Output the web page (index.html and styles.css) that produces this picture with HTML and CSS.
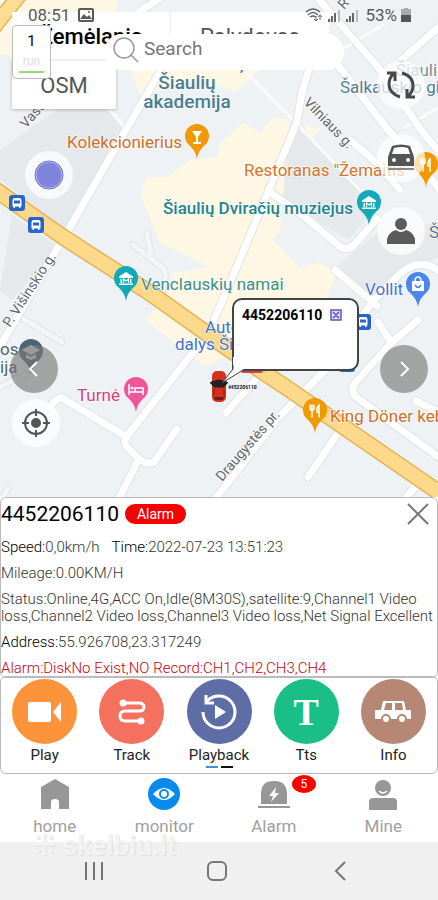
FILE: index.html
```html
<!DOCTYPE html>
<html lang="en">

<head>
  <meta charset="UTF-8">
  <meta name="viewport" content="width=device-width, initial-scale=1">
  <title>Monitor</title>
  <link rel="stylesheet" href="styles.css">
</head>

<body>
  <div class="screen">
    <main class="map">
      <svg class="map-canvas" viewBox="0 0 438 497" preserveAspectRatio="xMidYMid slice">
        <defs>
          <path id="pin" d="M0 22C-1.500 14-4 12-8.500 7.500A12 12 0 1 1 8.500 7.500C4 12 1.500 14 0 22Z" />
          <g id="bus">
            <rect x="-8" y="-8" width="16" height="16" rx="3" fill="#2465cf" />
            <path d="M-4.500-3Q-4.500-5-2-5H2Q4.500-5 4.500-3V3.500H3.500V5H2V3.500H-2V5H-3.500V3.500H-4.500Z" fill="#fff" />
            <path d="M-3-2.500H3V.5H-3Z" fill="#2465cf" />
          </g>
          <g id="museum" fill="#fff">
            <path d="M-7-2.500L0-7 7-2.500V-1H-7ZM-5.500 0H-4V4H-5.500ZM4 0H5.500V4H4ZM-7 4.500H7V6H-7Z" />
            <path d="M-2.500 4V0L0 2 2.500 0V4" fill="none" stroke="#fff" stroke-width="1.200" />
          </g>
          <g id="fork" fill="none" stroke="#fff" stroke-width="1.500" stroke-linecap="round">
            <path d="M-5-6V-2.500Q-5-1-3-1T-1-2.500V-6M-3-6V6M4 6V-6Q1.500-4 2 1H4" />
          </g>
          <!-- every white street, drawn twice: casing and fill -->
          <g id="streets">
            <path d="M166-6L136 14M160 72L127 128 66 234 0 346" />
            <path d="M310 66L302 92 297 122 270 187 238 264 214 320M205 338L187 360 127 436Q123 440 127 447L139 459Q147 465 154 462L177 429M137 463L118 500M127 437L62 398Q58 396 50 407" />
            <path d="M312-8L378 67 421 130 450 165M334 60L388 130 412 154 440 190M350 140L377 163 400 190" />
            <path d="M271 193L305 217 338 245Q346 252 354 245L377 219M401 60L440 26" />
            <path d="M335 270L377 306M216 498L278 418 330 365 372 302 400 274Q420 256 440 272M378 322L391 342" />
            <path d="M418 320L391 343 355 383Q350 390 356 397L378 413 440 458M338 433L308 477M256 379L226 413M415 487L402 502M416 401L440 413" />
          </g>
        </defs>
        <rect width="438" height="497" fill="#eff2f4" />
        <g fill="#e6e9ec">
          <path d="M0 150L90 86 125 130 65 230 0 180ZM12 215L60 248 12 300 0 290ZM268 190L300 128 360 186 375 210 348 240ZM335 268L378 232 438 222V258L400 270 374 300ZM130 60H165L145 80Z" />
        </g>
        <g fill="#fef7e4">
          <path d="M0 0H118L104 65 60 60 0 55ZM128 65L170 40 262 68 236 92 200 80 140 95Z" />
          <path d="M273 117L290 120 280 230 273 240 300 268 320 262 337 274 325 302 300 352 240 350 187 310 167 297 173 273 210 267 160 243 150 218 140 193 147 177 167 177 190 160 217 157 220 143 243 123 260 133Z" />
          <path d="M145 320L158 306 228 356 205 366ZM305 125L320 128 312 140Z" />
        </g>
        <g fill="none" stroke="#dfe2e5" stroke-linecap="round" stroke-width="7">
          <path d="M20 317L62 342M0 387L26 374M8 489L0 500M133 245L163 268Q168 272 162 293M147 233L151 256M155 0L168-10" />
        </g>
        <g fill="none" stroke="#f4f5f6" stroke-linecap="round" stroke-width="5">
          <path d="M20 317L62 342M0 387L26 374M8 489L0 500M133 245L163 268Q168 272 162 293M147 233L151 256" />
        </g>
        <g fill="none" stroke="#fafbfb" stroke-width="3">
          <path d="M247 73L293 120 362 192M338 52L391 20M88 84L125 128M404 128L438 108" />
        </g>
        <g fill="none" stroke-linecap="round" stroke-linejoin="round">
          <use href="#streets" stroke="#e1e4e7" stroke-width="9" />
          <use href="#streets" stroke="#fff" stroke-width="7" />
          <path d="M-10 32L22-8" stroke="#e3b35a" stroke-width="16" />
          <path d="M-10 32L22-8" stroke="#fddd92" stroke-width="13" />
          <path d="M-10 186L63 237 150 293 230 350 290 390 450 500" stroke="#e3b35a" stroke-width="17" />
          <path d="M-10 186L63 237 150 293 230 350 290 390 450 500" stroke="#fdd98c" stroke-width="14" />
        </g>

        <g class="street-name">
          <text transform="translate(303 103) rotate(46)">Vilniaus g.</text>
          <text transform="translate(10 328) rotate(-57)">P. Višinskio g.</text>
          <text transform="translate(222 482) rotate(-49)">Draugystės pr.</text>
          <text transform="translate(26 129) rotate(-48)">Vasario</text>
          <text transform="translate(344 10) rotate(-48)">R</text>
        </g>
        <g class="place place-large" text-anchor="middle" fill="#4c7d90" font-weight="500">
          <text x="187" y="70">universitetas,</text>
          <text x="187" y="89">Šiaulių</text>
          <text x="187" y="108">akademija</text>
        </g>
        <g class="place">
          <text x="67" y="148" fill="#c9712c">Kolekcionierius</text>
          <text x="244" y="176" fill="#d0762c">Restoranas "Žemaitis</text>
          <text x="163" y="214" fill="#1e858d" font-weight="500">Šiaulių Dviračių muziejus</text>
          <text x="141" y="290" fill="#3c908c">Venclauskių namai</text>
          <text x="365" y="295" fill="#4373d3">Vollit</text>
          <text x="205" y="333" fill="#3f74cc">Autodalys</text>
          <text x="175" y="350" fill="#3f74cc">dalys Šiauliai</text>
          <text x="77" y="401" fill="#d2427e">Turnė</text>
          <text x="330" y="422" fill="#c9712c">King Döner kebabai</text>
          <text x="396" y="76" fill="#7a8a95">Šiaulių</text>
          <text x="340" y="93" fill="#557c94">Šalkauskio gimn.</text>
          <text x="429" y="238" fill="#5f7480">Š</text>
          <text x="0" y="355" fill="#4f6069">os</text>
          <text x="0" y="373" fill="#4f6069">ija</text>
        </g>

        <use href="#bus" x="17" y="203" />
        <use href="#bus" x="36" y="225" />
        <use href="#bus" x="363" y="322" />
        <use href="#bus" x="347" y="364" />
        <rect x="241" y="358" width="22" height="15" rx="2" fill="#d5434a" />

        <use href="#pin" x="197" y="137" fill="#f29900" />
        <path d="M192 131H202L198 137V142H201V144H193V142H196V137Z" fill="#fff" />
        <use href="#pin" x="426" y="165" fill="#f29900" />
        <use href="#fork" x="426" y="165" />
        <use href="#pin" x="315" y="411" fill="#f29900" />
        <use href="#fork" x="315" y="411" />
        <use href="#pin" x="369" y="203" fill="#12a9ba" />
        <use href="#museum" x="369" y="203" />
        <use href="#pin" x="126" y="279" fill="#12a9ba" />
        <use href="#museum" x="126" y="279" />
        <use href="#pin" x="418" y="285" fill="#4b85ee" />
        <path d="M412 281H424V291H412Z" fill="#fff" />
        <path d="M415 281Q415 277 418 277T421 281" fill="none" stroke="#fff" stroke-width="1.500" />
        <path d="M415 285Q418 290 421 285" fill="none" stroke="#4b85ee" stroke-width="1.500" />
        <use href="#pin" x="136" y="390" fill="#f0569a" />
        <path d="M129 384V395M129 392H143V395M143 392V388H135V392" fill="none" stroke="#fff" stroke-width="1.500" />
        <circle cx="132" cy="388" r="1.500" fill="#fff" />
        <use href="#pin" x="31" y="352" fill="#4a6472" />
        <path d="M22 350L31 345 40 350 31 355ZM26 354V358L31 360 36 358V354L31 357Z" fill="#d3dade" />

        <!-- tracked vehicle -->
        <g>
          <rect x="212" y="371" width="14" height="31" rx="5" fill="#d3321f" />
          <path d="M210 383L213 381V386M228 383L225 381V386M213 382Q219 378 225 382L224 387H214Z" fill="#25201f" stroke="#25201f" />
          <path d="M214 397H224L223 400H215Z" fill="#7a1a12" />
          <path d="M214 389V395M224 389V395" stroke="#7a1a12" />
          <text x="228" y="389" class="vehicle-tag">4452206110</text>
        </g>
      </svg>

      <div class="map-type">
        <button class="map-type-btn active">Žemėlapis</button>
        <button class="map-type-btn">Palydovas</button>
      </div>
      <button class="map-layer">OSM</button>

      <div class="search">
        <svg width="28" height="28" viewBox="0 0 28 28" fill="none" stroke="#999" stroke-width="1.500">
          <circle cx="12" cy="12" r="10" />
          <path d="M19 19L26 26" />
        </svg>
        <input class="search-input" type="text" placeholder="Search" aria-label="Search">
      </div>

      <div class="run">
        <span class="run-count">1</span>
        <span class="run-label">run</span>
        <span class="run-line"></span>
      </div>

      <header class="status-bar">
        <span>08:51</span>
        <svg width="16" height="14" viewBox="0 0 16 14">
          <rect x="1" y="1" width="14" height="12" rx="1" fill="none" stroke="#5a5a5a" stroke-width="2" />
          <path d="M2 11L6 6 9 9 11 7 14 11Z" fill="#5a5a5a" />
          <circle cx="11" cy="4" r="1" fill="#5a5a5a" />
        </svg>
        <span class="spacer"></span>
        <svg width="56" height="16" viewBox="0 0 56 16" fill="none" stroke="#666">
          <path d="M1 5Q8-1 15 5M3 8Q8 3 13 8M5 10Q8 8 11 10" stroke-width="1.500" />
          <path d="M11 9V14M9 12L11 14 13 12M15 13V8M13 10L15 8 17 10" />
          <path d="M24 15V12M27 15V9M30 15V6M42 15V12M45 15V9M48 15V6" stroke-width="2" />
          <path d="M34 15V3M52 15V3" stroke="#bbb" stroke-width="2" />
        </svg>
        <span>53%</span>
        <svg width="10" height="14" viewBox="0 0 10 14">
          <path d="M3 0H7V1H10V14H0V1H3Z" fill="#aaa" />
          <path d="M0 7H10V14H0Z" fill="#555" />
        </svg>
      </header>

      <button class="round-btn btn-status" aria-label="Status">
        <svg width="32" height="32" viewBox="0 0 32 32">
          <circle cx="16" cy="16" r="14" fill="#8184dc" stroke="#6e72c8" />
          <circle cx="16" cy="16" r="13" fill="none" stroke="#b3b5ee" />
        </svg>
      </button>
      <button class="round-btn btn-refresh" aria-label="Refresh">
        <svg width="32" height="32" viewBox="0 0 32 32" fill="none" stroke="#484848" stroke-width="3">
          <path d="M15 28Q4 24 4 15 4 9 9 4M2 4H10V12M17 4Q28 7 28 17 28 23 23 27M30 28H22V20" />
        </svg>
      </button>
      <button class="round-btn btn-car" aria-label="Vehicles">
        <svg width="28" height="28" viewBox="0 0 28 28">
          <path d="M5 2Q14-1 23 2L26 10 27 13V22H1V13L2 10ZM7 4L5 10H23L21 4Q14 2 7 4Z" fill="#555" fill-rule="evenodd" />
          <path d="M1 25H27" stroke="#888" stroke-width="2" />
          <circle cx="7" cy="16" r="2" fill="#fff" />
          <circle cx="21" cy="16" r="2" fill="#fff" />
        </svg>
      </button>
      <button class="round-btn btn-user" aria-label="Driver">
        <svg width="30" height="28" viewBox="0 0 30 28" fill="#5b5b5b">
          <circle cx="15" cy="7" r="6" />
          <path d="M1 27V22Q3 15 10 13 15 17 20 13 27 15 29 22V27Z" />
        </svg>
      </button>
      <button class="round-btn btn-locate" aria-label="Locate">
        <svg width="30" height="30" viewBox="0 0 30 30" fill="none" stroke="#555" stroke-width="2">
          <circle cx="15" cy="15" r="11" />
          <circle cx="15" cy="15" r="4" fill="#555" />
          <path d="M15 1V8M15 22V29M1 15H8M22 15H29" />
        </svg>
      </button>
      <button class="arrow-btn btn-prev" aria-label="Previous">
        <svg width="12" height="18" viewBox="0 0 12 18" fill="none" stroke="#fff" stroke-width="2"><path d="M9 2L2 9 9 16" /></svg>
      </button>
      <button class="arrow-btn btn-next" aria-label="Next">
        <svg width="12" height="18" viewBox="0 0 12 18" fill="none" stroke="#fff" stroke-width="2"><path d="M3 2L10 9 3 16" /></svg>
      </button>

      <div class="callout">
        <span>4452206110</span>
        <button class="callout-close" aria-label="Close">
          <svg width="12" height="12" viewBox="0 0 12 12" fill="#dddcfa" stroke="#5d55b8" stroke-width="1.500"><path d="M1 1H11V11H1ZM3 3L9 9M9 3L3 9" /></svg>
        </button>
        <svg class="callout-tail" width="24" height="30" viewBox="0 0 24 30">
          <path d="M12 1V13L1 27 22 14V1Z" fill="#fff" />
          <path d="M12 9V13L1 27 22 14" fill="none" stroke="#444" />
        </svg>
      </div>
    </main>

    <section class="details">
      <div class="details-head">
        <h1 class="device">4452206110</h1>
        <span class="alarm-tag">Alarm</span>
        <button class="close" aria-label="Close">
          <svg width="22" height="22" viewBox="0 0 22 22" stroke="#777" stroke-width="2"><path d="M1 1L21 21M21 1L1 21" /></svg>
        </button>
      </div>
      <p class="row"><span><b>Speed:</b>0,0km/h</span><span><b>Time:</b>2022-07-23 13:51:23</span></p>
      <p>Mileage:0.00KM/H</p>
      <p>Status:Online,4G,ACC On,Idle(8M30S),satellite:9,Channel1 Video loss,Channel2 Video loss,Channel3 Video loss,Net Signal Excellent</p>
      <p><b>Address:</b>55.926708,23.317249</p>
      <p class="alarm-text">Alarm:DiskNo Exist,NO Record:CH1,CH2,CH3,CH4</p>
    </section>

    <section class="actions">
      <div class="action-list">
        <button class="action">
          <span class="action-icon orange">
            <svg width="34" height="22" viewBox="0 0 34 22" fill="#fff"><rect y="1" width="23" height="20" rx="2" /><path d="M25 11L33 1V21Z" /></svg>
          </span>
          Play
        </button>
        <button class="action">
          <span class="action-icon red">
            <svg width="28" height="28" viewBox="0 0 28 28" fill="none" stroke="#fff" stroke-width="3">
              <path d="M5 5H21Q26 5 26 9T21 13H7Q2 13 2 18T7 23H22" />
              <circle cx="5" cy="5" r="2" fill="#fff" />
              <circle cx="23" cy="23" r="2" fill="#fff" />
            </svg>
          </span>
          Track
        </button>
        <button class="action">
          <span class="action-icon indigo">
            <svg width="38" height="38" viewBox="0 0 38 38" fill="none" stroke="#fff" stroke-width="3">
              <path d="M3 19A16 16 0 1 0 19 3Q12 3 7 8" />
              <path d="M6 2V10H14" />
              <path d="M15 12L26 19 15 26Z" fill="#fff" stroke="none" />
            </svg>
          </span>
          Playback
        </button>
        <button class="action">
          <span class="action-icon green"><span class="letter">T</span></span>
          Tts
        </button>
        <button class="action">
          <span class="action-icon brown">
            <svg width="38" height="24" viewBox="0 0 38 24">
              <path d="M9 1H30L32 10H37V19H1V10H7ZM12 3L10 10H18V3ZM21 3V10H29L28 3Z" fill="#fff" fill-rule="evenodd" />
              <circle cx="12" cy="19" r="4" fill="#fff" stroke="#b58774" stroke-width="2" />
              <circle cx="28" cy="19" r="4" fill="#fff" stroke="#b58774" stroke-width="2" />
            </svg>
          </span>
          Info
        </button>
      </div>
      <div class="pager"><span class="page current"></span><span class="page"></span></div>
    </section>

    <nav class="tabs">
      <a class="tab" href="#">
        <svg width="32" height="32" viewBox="0 0 32 32"><path d="M16 1L30 9V31H20V24Q20 21 16 21T12 24V31H2V9Z" fill="#979797" /></svg>
        home
      </a>
      <a class="tab" href="#">
        <svg width="32" height="32" viewBox="0 0 32 32">
          <circle cx="16" cy="16" r="16" fill="#078bec" />
          <path d="M5 16Q16 4 27 16 16 28 5 16Z" fill="#fff" />
          <circle cx="16" cy="16" r="4" fill="#fff" stroke="#078bec" stroke-width="2" />
        </svg>
        monitor
      </a>
      <a class="tab" href="#">
        <svg width="32" height="32" viewBox="0 0 32 32" fill="#979797">
          <path d="M3 26V16Q3 3 16 3T29 16V26ZM0 28H32V30H0Z" />
          <path d="M18 9L11 18H15L13 24 21 15H17Z" fill="#fff" />
        </svg>
        Alarm
        <span class="badge">5</span>
      </a>
      <a class="tab" href="#">
        <svg width="32" height="32" viewBox="0 0 32 32" fill="#979797">
          <circle cx="16" cy="10" r="8" />
          <path d="M2 32V24Q2 20 6 20H26Q30 20 30 24V32Z" />
          <path d="M12 13Q16 17 20 13" fill="none" stroke="#fff" stroke-width="1.500" />
        </svg>
        Mine
      </a>
    </nav>

    <footer class="system-nav">
      <span class="watermark">⁜ skelbiu.lt</span>
      <button class="sys-btn" aria-label="Recent apps">
        <svg width="18" height="20" viewBox="0 0 18 20" stroke="#777" stroke-width="2"><path d="M1 1V19M9 1V19M17 1V19" /></svg>
      </button>
      <button class="sys-btn" aria-label="Home screen">
        <svg width="20" height="20" viewBox="0 0 20 20" fill="none" stroke="#777" stroke-width="2"><rect x="1" y="1" width="18" height="18" rx="5" /></svg>
      </button>
      <button class="sys-btn" aria-label="Back">
        <svg width="12" height="20" viewBox="0 0 12 20" fill="none" stroke="#777" stroke-width="2"><path d="M11 1L2 10 11 19" /></svg>
      </button>
    </footer>
  </div>
</body>

</html>
```
FILE: styles.css
```css
* {
  box-sizing: border-box;
  margin: 0;
  padding: 0;
}

body {
  font-family: Roboto, "Noto Sans", sans-serif;
  color: #666;
  background-color: #fff;
}

button {
  border: none;
  background: none;
  font-family: inherit;
  color: inherit;
  cursor: pointer;
}

svg {
  display: block;
}

.screen {
  min-height: 100vh;
  display: flex;
  flex-direction: column;
}

/* map */
.map {
  position: relative;
  flex: 1;
  min-height: 460px;
  overflow: hidden;
  background-color: #eff2f4;
}

.map-canvas {
  position: absolute;
  width: 100%;
  height: 100%;
}

.place {
  font-size: 17px;
}

.place-large {
  font-size: 19px;
}

.street-name {
  font-size: 14px;
  fill: #62676c;
}

.place text,
.street-name text {
  stroke: #fff;
  stroke-width: 1px;
  paint-order: stroke;
}

.vehicle-tag {
  font-size: 5px;
  font-weight: bold;
  fill: #111;
}

.status-bar {
  position: absolute;
  top: 3px;
  left: 28px;
  right: 27px;
  height: 24px;
  display: flex;
  align-items: center;
  gap: 4px;
  font-size: 17px;
  color: #5a5a5a;
}

.status-bar span:first-child {
  margin-right: 4px;
}

.spacer {
  flex: 1;
}

.map-type {
  position: absolute;
  top: 12px;
  left: 12px;
  height: 48px;
  display: flex;
  gap: 1px;
  background-color: #eee;
}

.map-type-btn {
  width: 158px;
  background-color: #fff;
  font-size: 22px;
  color: #555;
}

.map-type-btn.active {
  font-weight: 500;
  color: #000;
}

.map-layer {
  position: absolute;
  top: 60px;
  left: 12px;
  width: 104px;
  height: 49px;
  border-top: 1px solid #eee;
  background-color: #fff;
  box-shadow: 0 1px 3px rgba(0, 0, 0, .25);
  font-size: 22px;
  color: #555;
}

.search {
  position: absolute;
  top: 34px;
  left: 104px;
  width: 240px;
  height: 36px;
  padding: 2px 0 0 8px;
  display: flex;
  align-items: flex-start;
  gap: 4px;
  border-radius: 18px;
  background-color: #fff;
}

.search-input {
  flex: 1;
  min-width: 0;
  height: 24px;
  border: none;
  outline: none;
  background: none;
  font-family: inherit;
  font-size: 19px;
  color: #333;
}

.search-input::placeholder {
  color: #777;
}

.run {
  position: absolute;
  top: 25px;
  left: 12px;
  width: 39px;
  height: 54px;
  display: flex;
  flex-direction: column;
  align-items: center;
  border: 1px solid #bbb;
  border-radius: 4px;
  background-color: #fff;
  font-size: 15px;
  line-height: 20px;
}

.run-count {
  padding-top: 5px;
  color: #000;
}

.run-label {
  font-size: 12px;
  color: #ddd;
}

.run-line {
  width: 25px;
  height: 2px;
  background-color: #8ddd7d;
}

.round-btn,
.arrow-btn {
  position: absolute;
  width: 48px;
  height: 48px;
  display: flex;
  align-items: center;
  justify-content: center;
  border-radius: 50%;
  background-color: rgba(255, 255, 255, .7);
}

.arrow-btn {
  background-color: rgba(120, 120, 120, .65);
}

.btn-status {
  top: 151px;
  left: 25px;
}

.btn-refresh {
  top: 61px;
  right: 13px;
}

.btn-car {
  top: 134px;
  right: 13px;
}

.btn-user {
  top: 207px;
  right: 13px;
}

.btn-locate {
  top: 399px;
  left: 12px;
}

.btn-prev {
  top: 345px;
  left: 10px;
}

.btn-next {
  top: 345px;
  right: 10px;
}

.callout {
  position: absolute;
  top: 298px;
  left: 232px;
  width: 127px;
  height: 73px;
  padding: 7px 8px;
  display: flex;
  align-items: flex-start;
  gap: 8px;
  border: 2px solid #444;
  border-radius: 10px;
  border-bottom-left-radius: 0;
  background-color: #fff;
  font-size: 14px;
  line-height: 16px;
  font-weight: bold;
  color: #000;
}

.callout-close {
  padding-top: 2px;
}

.callout-tail {
  position: absolute;
  top: 56px;
  left: -13px;
}

/* device details */
.details {
  display: flex;
  flex-direction: column;
  gap: 9px;
  border: 1px solid #bbb;
  border-radius: 6px;
  background-color: #fff;
  font-size: 15px;
  font-weight: 300;
  line-height: 17px;
  color: #333;
}

.details-head {
  height: 32px;
  padding-right: 8px;
  display: flex;
  align-items: center;
  gap: 6px;
}

.device {
  font-size: 21px;
  font-weight: normal;
  color: #000;
}

.alarm-tag {
  width: 61px;
  border-radius: 10px;
  background-color: #f80000;
  color: #fff;
  font-size: 14px;
  font-weight: 400;
  line-height: 20px;
  text-align: center;
}

.close {
  margin-left: auto;
}

.row {
  display: flex;
  gap: 12px;
}

.details b {
  font-weight: 300;
  color: #000;
}

.details .alarm-text {
  color: #c8000e;
}

/* action buttons */
.actions {
  margin-top: -2px;
  height: 98px;
  padding-top: 2px;
  border: 1px solid #bbb;
  border-radius: 6px;
}

.action-list {
  display: flex;
}

.action {
  flex: 1;
  display: flex;
  flex-direction: column;
  align-items: center;
  font-size: 15px;
  line-height: 22px;
  color: #222;
}

.action-icon {
  width: 65px;
  height: 65px;
  display: flex;
  align-items: center;
  justify-content: center;
  border-radius: 50%;
}

.orange {
  background-color: #fd943b;
}

.red {
  background-color: #f4705f;
}

.indigo {
  background-color: #5f6da6;
}

.green {
  background-color: #19bf85;
}

.brown {
  background-color: #b58774;
}

.letter {
  font-family: "Liberation Serif", serif;
  font-size: 38px;
  font-weight: bold;
  color: #fff;
}

.pager {
  display: flex;
  justify-content: center;
  gap: 3px;
}

.page {
  width: 12px;
  height: 2px;
  background-color: #111;
}

.page.current {
  background-color: #3d8fd8;
}

/* bottom tabs */
.tabs {
  height: 68px;
  padding-top: 4px;
  display: flex;
}

.tab {
  position: relative;
  flex: 1;
  display: flex;
  flex-direction: column;
  align-items: center;
  gap: 4px;
  font-size: 17px;
  line-height: 24px;
  color: #a0a0a0;
  text-decoration: none;
}

.badge {
  position: absolute;
  top: -3px;
  left: calc(50% + 18px);
  width: 24px;
  height: 18px;
  border-radius: 50%;
  background-color: #f80000;
  color: #fff;
  font-size: 12px;
  line-height: 18px;
  text-align: center;
}

.system-nav {
  position: relative;
  height: 58px;
  padding: 0 36px 0 32px;
  display: flex;
  background-color: #f0f0f0;
}

.sys-btn {
  flex: 1;
  display: flex;
  align-items: center;
  justify-content: center;
}

.watermark {
  position: absolute;
  top: -10px;
  left: 33px;
  font-size: 28px;
  line-height: 28px;
  font-weight: 500;
  color: #f3f3f3;
  text-shadow: 1px 1px 1px #ddd;
}
```
